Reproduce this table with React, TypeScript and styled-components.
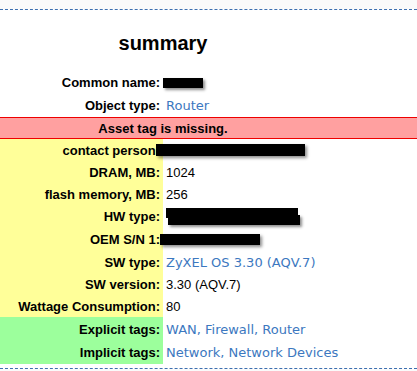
import styled, { createGlobalStyle } from "styled-components";

const GlobalStyle = createGlobalStyle`
  html, body {
    margin: 0;
    padding: 0;
    background: #fafafa;
  }
`;

const TopStrip = styled.div`
  height: 9px;
  background: #fafafa;
`;

const Portlet = styled.div`
  background: #ffffff;
  border-top: 1px dashed #3c6fb0;
  border-bottom: 1px dashed #3c6fb0;
  padding-bottom: 4px;
  font-family: "Liberation Sans", Arial, sans-serif;
  font-size: 13px;
  color: #000;
`;

const Title = styled.h2`
  width: 326px;
  margin: 0;
  padding: 21px 0 16px;
  line-height: 24px;
  text-align: center;
  font-size: 20px;
  font-weight: bold;
`;

const Row = styled.div<{ $h: number; $tone?: "yellow" | "green" }>`
  display: grid;
  grid-template-columns: 163px 1fr;
  height: ${({ $h }) => $h}px;

  & > :first-child {
    background: ${({ $tone }) =>
      $tone === "yellow" ? "#ffff99" : $tone === "green" ? "#9cff9c" : "transparent"};
  }
`;

const Label = styled.div`
  display: flex;
  align-items: center;
  justify-content: flex-end;
  padding-right: 3px;
  font-weight: bold;
  white-space: nowrap;
`;

const Value = styled.div`
  display: flex;
  align-items: center;
  padding-left: 3px;
  white-space: nowrap;
`;

const Link = styled.a`
  font-family: "DejaVu Sans", Verdana, sans-serif;
  font-size: 13px;
  color: #3c78c0;
  text-decoration: none;
`;

const Alert = styled.div`
  height: 20px;
  background: #ffa0a0;
  border-top: 1px solid #ee0000;
  border-bottom: 1px solid #ee0000;
  display: flex;
  align-items: center;
`;

const AlertText = styled.div`
  width: 326px;
  text-align: center;
  font-weight: bold;
`;

// blacked-out value, a marker stroke with a soft edge
const Redact = styled.span<{ $w: number; $h: number; $shift?: number; $double?: boolean }>`
  position: relative;
  display: inline-block;
  width: ${({ $w }) => $w}px;
  height: ${({ $h }) => $h}px;
  margin-left: ${({ $shift }) => $shift ?? 0}px;
  background: #000;
  box-shadow: ${({ $double }) =>
    $double
      ? "2px 7px 0 0 #000, 4px 9px 3px rgba(0,0,0,0.45)"
      : "2px 2px 3px rgba(0,0,0,0.45)"};
`;

export default function App() {
  return (
    <>
      <GlobalStyle />
      <TopStrip />
      <Portlet>
        <Title>summary</Title>

        <Row $h={23}>
          <Label>Common name:</Label>
          <Value>
            <Redact $w={40} $h={10} $shift={-3} />
          </Value>
        </Row>
        <Row $h={23}>
          <Label>Object type:</Label>
          <Value>
            <Link>Router</Link>
          </Value>
        </Row>

        <Alert>
          <AlertText>Asset tag is missing.</AlertText>
        </Alert>

        <Row $h={22} $tone="yellow">
          <Label>contact person:</Label>
          <Value>
            <Redact $w={149} $h={12} $shift={-10} />
          </Value>
        </Row>
        <Row $h={22} $tone="yellow">
          <Label>DRAM, MB:</Label>
          <Value>1024</Value>
        </Row>
        <Row $h={22} $tone="yellow">
          <Label>flash memory, MB:</Label>
          <Value>256</Value>
        </Row>
        <Row $h={23} $tone="yellow">
          <Label>HW type:</Label>
          <Value>
            <Redact $w={132} $h={10} $shift={0} $double style={{ top: -4 }} />
          </Value>
        </Row>
        <Row $h={22} $tone="yellow">
          <Label>OEM S/N 1:</Label>
          <Value>
            <Redact $w={100} $h={11} $shift={-6} />
          </Value>
        </Row>
        <Row $h={24} $tone="yellow">
          <Label>SW type:</Label>
          <Value>
            <Link>ZyXEL OS 3.30 (AQV.7)</Link>
          </Value>
        </Row>
        <Row $h={21} $tone="yellow">
          <Label>SW version:</Label>
          <Value>3.30 (AQV.7)</Value>
        </Row>
        <Row $h={22} $tone="yellow">
          <Label>Wattage Consumption:</Label>
          <Value>80</Value>
        </Row>

        <Row $h={24} $tone="green">
          <Label>Explicit tags:</Label>
          <Value>
            <Link>WAN, Firewall, Router</Link>
          </Value>
        </Row>
        <Row $h={23} $tone="green">
          <Label>Implicit tags:</Label>
          <Value>
            <Link>Network, Network Devices</Link>
          </Value>
        </Row>
      </Portlet>
    </>
  );
}
